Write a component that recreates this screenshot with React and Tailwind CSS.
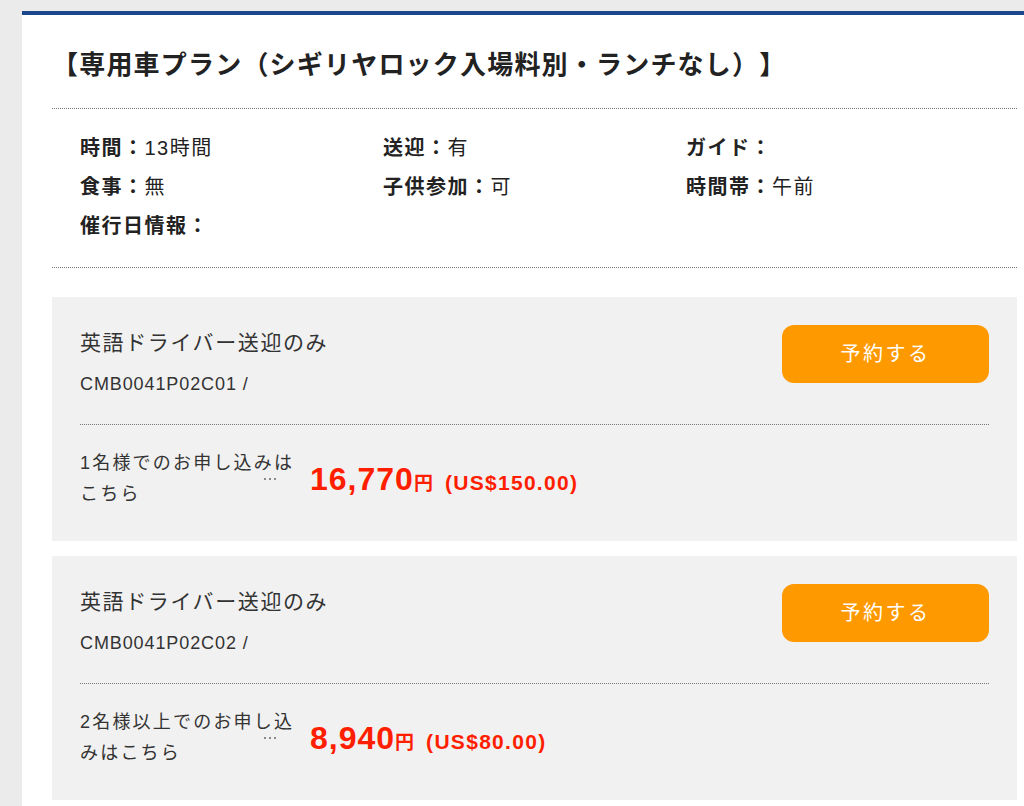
import React from 'react';

const info = [
  { label: '時間', value: '13時間' },
  { label: '送迎', value: '有' },
  { label: 'ガイド', value: '' },
  { label: '食事', value: '無' },
  { label: '子供参加', value: '可' },
  { label: '時間帯', value: '午前' },
  { label: '催行日情報', value: '' },
];

const courses = [
  {
    name: '英語ドライバー送迎のみ',
    code: 'CMB0041P02C01 /',
    lines: ['1名様でのお申し込みは', 'こちら'],
    price: '16,770',
    usd: '(US$150.00)',
  },
  {
    name: '英語ドライバー送迎のみ',
    code: 'CMB0041P02C02 /',
    lines: ['2名様以上でのお申し込', 'みはこちら'],
    price: '8,940',
    usd: '(US$80.00)',
  },
];

const CourseCard = ({ course }) => (
  <div className="bg-[#f1f1f1] px-[28px] pt-[28px] pb-[31px] mb-[15px]">
    <div className="flex justify-between">
      <div className="pt-[3px]">
        <div className="text-[21px] leading-[30px] tracking-[1.6px] text-[#333]">{course.name}</div>
        <div className="mt-[13px] text-[18px] leading-[26px] tracking-[0.9px] text-[#333]">{course.code}</div>
      </div>
      <button className="w-[207px] h-[58px] rounded-[12px] bg-[#ff9900] text-white text-[20px] tracking-[2.5px]">
        予約する
      </button>
    </div>
    <div className="mt-[27px] border-t border-dotted border-[#777]" />
    <div className="flex items-center pt-[23px]">
      <div className="relative w-[218px] text-[18px] leading-[31px] tracking-[2.2px] text-[#333]">
        {course.lines.map((l) => (
          <div key={l} className="whitespace-nowrap">{l}</div>
        ))}
        <div className="absolute left-[184px] top-[30px] flex gap-[3px]">
          <div className="w-[2px] h-[2px] rounded-full bg-[#666]" />
          <div className="w-[2px] h-[2px] rounded-full bg-[#666]" />
          <div className="w-[2px] h-[2px] rounded-full bg-[#666]" />
        </div>
      </div>
      <div className="ml-[12px] flex items-baseline font-bold text-[#ff1e00]">
        <span className="text-[32px] leading-[40px] tracking-[1px]">{course.price}</span>
        <span className="text-[19px]">円</span>
        <span className="ml-[12px] text-[21px] tracking-[1.3px]">{course.usd}</span>
      </div>
    </div>
  </div>
);

export default function App() {
  return (
    <div
      className="min-h-screen bg-[#ebebeb] pt-[11px] pl-[22px] [text-spacing-trim:space-all]"
      style={{ fontFamily: '"Liberation Sans", "Noto Sans CJK JP", sans-serif' }}
    >
      <div className="bg-white border-t-4 border-[#1a468c] pl-[30px] pr-[7px] min-h-[795px]">
        <h1 className="pt-[32px] text-[26px] leading-[36px] font-bold tracking-[1.2px] text-[#222]">
          【専用車プラン（シギリヤロック入場料別・ランチなし）】
        </h1>
        <div className="mt-[25px] border-t border-dotted border-[#777]" />
        <div className="grid grid-cols-3 gap-y-[15px] px-[28px] pt-[27px] pb-[29px] text-[20px] leading-[24px] tracking-[1.5px] text-[#222]">
          {info.map((it) => (
            <div key={it.label}>
              <span className="font-bold">{it.label}：</span>
              <span>{it.value}</span>
            </div>
          ))}
        </div>
        <div className="border-t border-dotted border-[#777] mb-[29px]" />
        {courses.map((c) => (
          <CourseCard key={c.code} course={c} />
        ))}
      </div>
    </div>
  );
}
